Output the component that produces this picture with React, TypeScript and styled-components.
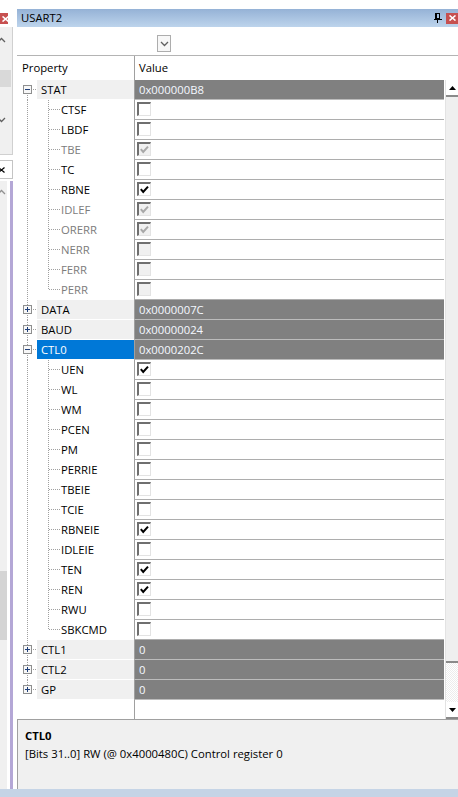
import React from 'react'
import styled, { createGlobalStyle } from 'styled-components'

const GlobalStyle = createGlobalStyle`
  html, body {
    margin: 0;
    padding: 0;
    background: #ffffff;
  }
  body {
    font-family: "Open Sans", "Noto Sans", sans-serif;
    font-size: 11.3px;
    color: #000000;
  }
  * {
    box-sizing: border-box;
  }
`

type Bit = {
  name: string;
  checked: boolean;
  disabled?: boolean;
}

type Reg = {
  name: string;
  value: string;
  open?: boolean;
  selected?: boolean;
  bits?: Bit[];
}

const registers: Reg[] = [
  {
    name: 'STAT',
    value: '0x000000B8',
    open: true,
    bits: [
      { name: 'CTSF', checked: false },
      { name: 'LBDF', checked: false },
      { name: 'TBE', checked: true, disabled: true },
      { name: 'TC', checked: false },
      { name: 'RBNE', checked: true },
      { name: 'IDLEF', checked: true, disabled: true },
      { name: 'ORERR', checked: true, disabled: true },
      { name: 'NERR', checked: false, disabled: true },
      { name: 'FERR', checked: false, disabled: true },
      { name: 'PERR', checked: false, disabled: true },
    ],
  },
  { name: 'DATA', value: '0x0000007C' },
  { name: 'BAUD', value: '0x00000024' },
  {
    name: 'CTL0',
    value: '0x0000202C',
    open: true,
    selected: true,
    bits: [
      { name: 'UEN', checked: true },
      { name: 'WL', checked: false },
      { name: 'WM', checked: false },
      { name: 'PCEN', checked: false },
      { name: 'PM', checked: false },
      { name: 'PERRIE', checked: false },
      { name: 'TBEIE', checked: false },
      { name: 'TCIE', checked: false },
      { name: 'RBNEIE', checked: true },
      { name: 'IDLEIE', checked: false },
      { name: 'TEN', checked: true },
      { name: 'REN', checked: true },
      { name: 'RWU', checked: false },
      { name: 'SBKCMD', checked: false },
    ],
  },
  { name: 'CTL1', value: '0' },
  { name: 'CTL2', value: '0' },
  { name: 'GP', value: '0' },
]

// ---------- tree drawings ----------

const DOT = '#a0a0a0'

const GroupTree: React.FC<{ first: boolean; last: boolean; open: boolean }> = ({ first, last, open }) => (
  <svg width="20" height="20" style={{ display: 'block', flex: 'none' }} shapeRendering="crispEdges">
    {!first && <line x1="10.5" y1="0" x2="10.5" y2="5" stroke={DOT} strokeDasharray="1 1" />}
    {!last && <line x1="10.5" y1="15" x2="10.5" y2="20" stroke={DOT} strokeDasharray="1 1" />}
    <line x1="16" y1="9.5" x2="20" y2="9.5" stroke={DOT} strokeDasharray="1 1" />
    <rect x="6.5" y="5.5" width="8" height="8" fill="#f7f7f7" stroke="#8e8f8f" />
    <line x1="8" y1="9.5" x2="13" y2="9.5" stroke="#1f3f7a" />
    {!open && <line x1="10.5" y1="7" x2="10.5" y2="12" stroke="#1f3f7a" />}
  </svg>
)

const BitTree: React.FC<{ last: boolean }> = ({ last }) => (
  <svg width="44" height="20" style={{ display: 'block', flex: 'none' }} shapeRendering="crispEdges">
    <line x1="10.5" y1="0" x2="10.5" y2="20" stroke={DOT} strokeDasharray="1 1" />
    <line x1="31.5" y1="0" x2="31.5" y2={last ? 10 : 20} stroke={DOT} strokeDasharray="1 1" />
    <line x1="32" y1="9.5" x2="43" y2="9.5" stroke={DOT} strokeDasharray="1 1" />
  </svg>
)

const Check: React.FC<{ disabled?: boolean }> = ({ disabled }) => (
  <svg width="12" height="12" style={{ display: 'block' }}>
    <path d="M1.8 5.2 L4.2 8 L9 2.6" fill="none" stroke={disabled ? '#a8a8a8' : '#000'} strokeWidth="2" />
  </svg>
)

const CrossIcon: React.FC<{ color: string; w?: number }> = ({ color, w = 1.6 }) => (
  <svg width="7" height="6" style={{ display: 'block' }}>
    <path d="M0.5 0.5 L6.5 5.5 M6.5 0.5 L0.5 5.5" stroke={color} strokeWidth={w} />
  </svg>
)

// ---------- layout ----------

const Page = styled.div`
  display: flex;
  flex-direction: column;
  width: 458px;
  height: 797px;
  overflow: hidden;
`

const TopGap = styled.div`
  height: 9px;
  flex: none;
`

const Main = styled.div`
  display: flex;
  flex: 1;
  min-height: 0;
`

const BottomStrip = styled.div`
  height: 8px;
  flex: none;
  background: #c5d4e6;
`

// left neighbour strip (cut off panels)
const LeftStrip = styled.div`
  width: 13px;
  flex: none;
  display: flex;
  flex-direction: column;
  margin-right: 4px;
`

const StripTab = styled.div`
  height: 18px;
  padding-top: 4px;
`

const MiniClose = styled.div`
  width: 8px;
  height: 11px;
  background: #c75050;
  display: flex;
  align-items: center;
  justify-content: flex-end;
  overflow: hidden;
`

const StripPane = styled.div`
  height: 128px;
  background: #f0f0f0;
  border-right: 1px solid #d0d0d0;
  border-bottom: 1px solid #d0d0d0;
  display: flex;
  flex-direction: column;
  padding-top: 10px;
`

const StripBlock = styled.div`
  margin-top: 27px;
  width: 11px;
  height: 17px;
  background: #d9d9d9;
`

const StripTabBox = styled.div`
  margin-top: 5px;
  height: 19px;
  border: 1px solid #c4c4c4;
  border-left: none;
  background: #fff;
  overflow: hidden;
  display: flex;
  align-items: center;
`

const StripLower = styled.div`
  flex: 1;
  margin-top: 2px;
  display: flex;
`

const StripGrey = styled.div`
  width: 7px;
  background: #f0f0f0;
  display: flex;
  flex-direction: column;
  padding-top: 8px;
`

const StripThumb = styled.div`
  margin-top: 376px;
  height: 69px;
  background: #d4d4d4;
`

const StripWhite = styled.div`
  width: 3px;
  background: #fff;
`

const StripPurple = styled.div`
  width: 3px;
  background: #b4a7d6;
`

// main panel
const Panel = styled.div`
  flex: 1;
  display: flex;
  flex-direction: column;
  min-width: 0;
`

const TitleBar = styled.div`
  height: 18px;
  flex: none;
  display: flex;
  align-items: center;
  padding-left: 4px;
  background: linear-gradient(to bottom, #95b2d6, #bdd4ec);
`

const Title = styled.span`
  flex: 1;
  line-height: 18px;
`

const PinWrap = styled.div`
  width: 16px;
  display: flex;
  justify-content: center;
`

const CloseBtn = styled.div`
  width: 12px;
  height: 11px;
  background: #c75050;
  display: flex;
  align-items: center;
  justify-content: center;
`

const Toolbar = styled.div`
  height: 29px;
  flex: none;
  border-bottom: 1px solid #b4b4b4;
  padding: 8px 0 0 140px;
`

const DropBtn = styled.div`
  width: 14px;
  height: 17px;
  border: 1px solid #adadad;
  background: #f7f7f7;
  display: flex;
  align-items: center;
  justify-content: center;
`

const Header = styled.div`
  height: 24px;
  flex: none;
  display: flex;
`

const HeadCell = styled.div<{ $w?: number }>`
  ${(p) => (p.$w ? `width: ${p.$w}px; flex: none;` : 'flex: 1;')}
  padding-left: ${(p) => (p.$w ? 5 : 4)}px;
  line-height: 24px;
  ${(p) => (p.$w ? '' : 'border-left: 1px solid #a0a0a0;')}
`

const Body = styled.div`
  flex: 1;
  display: flex;
  min-height: 0;
`

const List = styled.div`
  flex: 1;
  display: flex;
  flex-direction: column;
  padding-right: 1px;
`

const Row = styled.div`
  height: 20px;
  flex: none;
  display: flex;
`

const PropCell = styled.div`
  width: 117px;
  flex: none;
  display: flex;
  height: 20px;
`

const GroupLabel = styled.div<{ $selected?: boolean }>`
  flex: 1;
  height: 19px;
  padding-left: 4px;
  line-height: 19px;
  background: ${(p) => (p.$selected ? '#0078d7' : '#f0f0f0')};
  color: ${(p) => (p.$selected ? '#ffffff' : '#000000')};
`

const BitLabel = styled.div<{ $disabled?: boolean }>`
  flex: 1;
  line-height: 19px;
  color: ${(p) => (p.$disabled ? '#7c7c7c' : '#000000')};
`

const ValueCell = styled.div<{ $dark?: boolean }>`
  flex: 1;
  height: 20px;
  border-left: 1px solid #a0a0a0;
  border-bottom: 1px solid ${(p) => (p.$dark ? '#bcbcbc' : '#adadad')};
  background: ${(p) => (p.$dark ? '#808080' : '#ffffff')};
  color: #f4f8ff;
  padding-left: 4px;
  line-height: 19px;
  display: flex;
  align-items: center;
`

const FillRow = styled.div`
  flex: 1;
  display: flex;
`

const FillProp = styled.div`
  width: 117px;
  flex: none;
`

const FillValue = styled.div`
  flex: 1;
  border-left: 1px solid #a0a0a0;
`

const CheckBox = styled.div<{ $disabled?: boolean }>`
  width: 14px;
  height: 14px;
  margin-left: -2px;
  margin-top: -1px;
  border-top: 2px solid #6f6f6f;
  border-left: 2px solid #6f6f6f;
  border-right: 1px solid #e3e3e3;
  border-bottom: 1px solid #e3e3e3;
  background: ${(p) => (p.$disabled ? '#f0f0f0' : '#ffffff')};
`

const ScrollBar = styled.div`
  width: 13px;
  flex: none;
  display: flex;
  flex-direction: column;
  border-left: 1px solid #e3e3e3;
  background: #f0f0f0;
`

const ScrollBtn = styled.div`
  height: 17px;
  flex: none;
  background: #ffffff;
  border-bottom: 2px solid #8a8a8a;
  display: flex;
  align-items: center;
  justify-content: center;
`

const ScrollThumb = styled.div`
  height: 566px;
  flex: none;
  background: #efefef;
  border-bottom: 2px solid #8a8a8a;
`

const ScrollTrack = styled.div`
  flex: 1;
  background-color: #ffffff;
  background-image: repeating-conic-gradient(#ececec 0 25%, #ffffff 0 50%);
  background-size: 2px 2px;
`

const Description = styled.div`
  height: 70px;
  flex: none;
  background: #f0f0f0;
  border-top: 1px solid #a0a0a0;
  border-left: 1px solid #a0a0a0;
  padding: 7px 0 0 7px;
`

const DescTitle = styled.div`
  font-weight: bold;
  line-height: 18px;
`

const DescText = styled.div`
  line-height: 18px;
`

const Chevron: React.FC<{ up?: boolean; color?: string }> = ({ up, color = '#606060' }) => (
  <svg width="9" height="6" style={{ display: 'block' }}>
    <polyline points={up ? '1,5 4.5,1.5 8,5' : '1,1 4.5,4.5 8,1'} fill="none" stroke={color} strokeWidth="1.3" />
  </svg>
)

const Triangle: React.FC<{ up?: boolean }> = ({ up }) => (
  <svg width="7" height="4" style={{ display: 'block' }}>
    <polygon points={up ? '0,4 3.5,0 7,4' : '0,0 7,0 3.5,4'} fill="#000" />
  </svg>
)

const App: React.FC = () => {
  return (
    <Page>
      <GlobalStyle />
      <TopGap />
      <Main>
        <LeftStrip>
          <StripTab>
            <MiniClose>
              <div style={{ marginRight: -1 }}>
                <CrossIcon color="#fff" />
              </div>
            </MiniClose>
          </StripTab>
          <StripPane>
            <div style={{ marginLeft: -3 }}>
              <Chevron up />
            </div>
            <StripBlock />
            <div style={{ marginTop: 30, marginLeft: -3 }}>
              <Chevron />
            </div>
          </StripPane>
          <StripTabBox>
            <div style={{ marginLeft: -2 }}>
              <CrossIcon color="#000" w={1.3} />
            </div>
          </StripTabBox>
          <StripLower>
            <StripGrey>
              <div style={{ marginLeft: -3 }}>
                <Chevron up color="#909090" />
              </div>
              <StripThumb />
            </StripGrey>
            <StripWhite />
            <StripPurple />
          </StripLower>
        </LeftStrip>

        <Panel>
          <TitleBar>
            <Title>USART2</Title>
            <PinWrap>
              <svg width="8" height="10" style={{ display: 'block' }} shapeRendering="crispEdges">
                <rect x="1.5" y="0.5" width="4" height="5" fill="none" stroke="#000" />
                <line x1="2" y1="1" x2="2" y2="6" stroke="#000" strokeWidth="2" />
                <line x1="0" y1="6.5" x2="8" y2="6.5" stroke="#000" />
                <line x1="3.5" y1="7" x2="3.5" y2="10" stroke="#000" />
              </svg>
            </PinWrap>
            <CloseBtn>
              <CrossIcon color="#fff" />
            </CloseBtn>
          </TitleBar>

          <Toolbar>
            <DropBtn>
              <Chevron />
            </DropBtn>
          </Toolbar>

          <Header>
            <HeadCell $w={117}>Property</HeadCell>
            <HeadCell>Value</HeadCell>
          </Header>

          <Body>
            <List>
              {registers.map((reg, i) => (
                <React.Fragment key={reg.name}>
                  <Row>
                    <PropCell>
                      <GroupTree first={i === 0} last={i === registers.length - 1} open={!!reg.open} />
                      <GroupLabel $selected={reg.selected}>{reg.name}</GroupLabel>
                    </PropCell>
                    <ValueCell $dark>{reg.value}</ValueCell>
                  </Row>
                  {reg.open &&
                    reg.bits?.map((bit, j) => (
                      <Row key={bit.name}>
                        <PropCell>
                          <BitTree last={j === (reg.bits?.length ?? 0) - 1} />
                          <BitLabel $disabled={bit.disabled}>{bit.name}</BitLabel>
                        </PropCell>
                        <ValueCell>
                          <CheckBox $disabled={bit.disabled}>
                            {bit.checked && <Check disabled={bit.disabled} />}
                          </CheckBox>
                        </ValueCell>
                      </Row>
                    ))}
                </React.Fragment>
              ))}
              <FillRow>
                <FillProp />
                <FillValue />
              </FillRow>
            </List>
            <ScrollBar>
              <ScrollBtn>
                <Triangle up />
              </ScrollBtn>
              <ScrollThumb />
              <ScrollTrack />
              <ScrollBtn>
                <Triangle />
              </ScrollBtn>
            </ScrollBar>
          </Body>

          <Description>
            <DescTitle>CTL0</DescTitle>
            <DescText>[Bits 31..0] RW (@ 0x4000480C) Control register 0</DescText>
          </Description>
        </Panel>
      </Main>
      <BottomStrip />
    </Page>
  )
}

export default App
